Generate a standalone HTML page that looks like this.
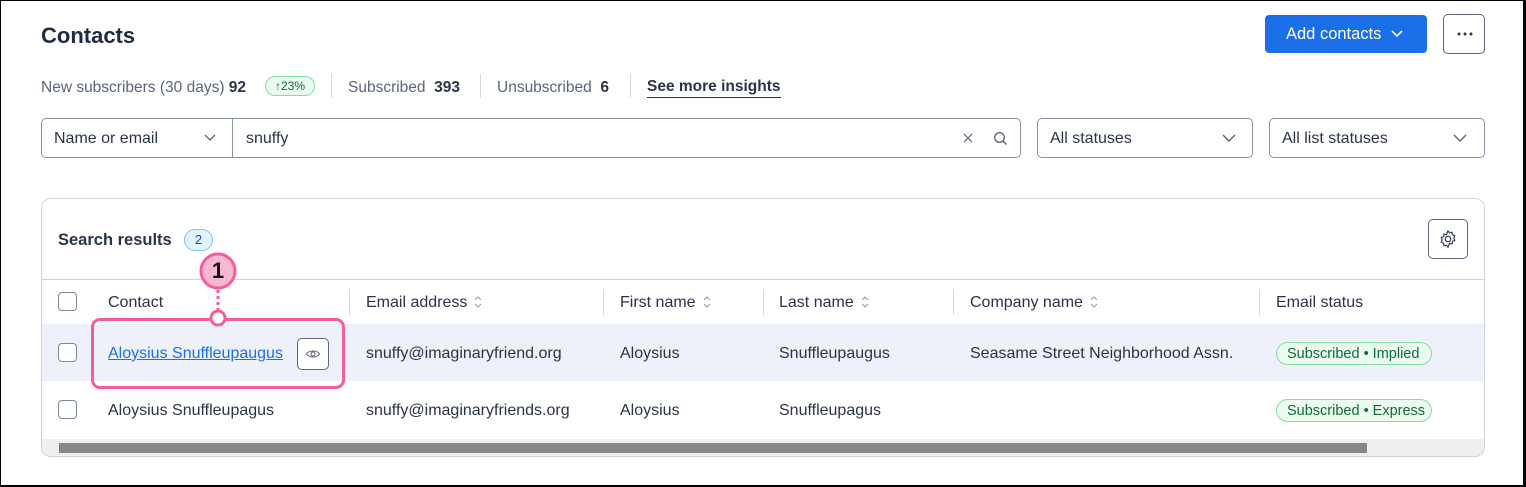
<!DOCTYPE html>
<html><head><meta charset="utf-8"><style>
*{box-sizing:border-box;margin:0;padding:0}
body{width:1526px;height:487px;background:#fff;font-family:"Liberation Sans",sans-serif;color:#2b3348;position:relative;overflow:hidden}
.frame{position:absolute;left:0;top:0;width:1526px;height:487px;border:1px solid #000;border-right:3px solid #000;border-bottom:2px solid #000}
.a{position:absolute;white-space:nowrap}
.box{position:absolute;border:1px solid #8b93a7;border-radius:5px;background:#fff}
.t15{font-size:16px}
.sep{position:absolute;width:1px;background:#d5d9e2}
.cb{position:absolute;width:19px;height:19px;border:1.5px solid #7c849a;border-radius:4px;background:#fff}
.pill{position:absolute;height:23px;border:1px solid #7fe0a2;background:#ecfbf0;border-radius:12px;color:#126b36;font-size:14.5px;line-height:22px;padding-left:10px}
svg{position:absolute}
.srt{display:inline-block;position:relative;width:10px;height:16px;vertical-align:-3px;margin-left:6px}
</style></head><body>
<div class="a" style="left:41px;top:23px;font-size:22px;font-weight:bold;color:#1f2a44">Contacts</div>
<div class="a" style="left:1265px;top:15px;width:162px;height:38px;background:#1b6fe8;border-radius:4px;color:#fff;font-size:16.5px;line-height:39px;padding-left:21px">Add contacts</div>
<svg style="left:1390px;top:29px" width="14" height="10"><path d="M2 2l5 5 5-5" stroke="#fff" stroke-width="1.6" fill="none"/></svg>
<div class="box" style="left:1443px;top:14px;width:42px;height:40px;border-color:#5d667b"></div>
<svg style="left:1455px;top:31px" width="20" height="6"><circle cx="4" cy="3" r="1.5" fill="#2b3348"/><circle cx="10" cy="3" r="1.5" fill="#2b3348"/><circle cx="16" cy="3" r="1.5" fill="#2b3348"/></svg>

<div class="a t15" style="left:41px;top:79px;color:#5b6478;font-size:15.5px">New subscribers (30 days) <b style="color:#2b3348">92</b></div>
<div class="a" style="left:265px;top:76px;width:50px;height:20px;border:1px solid #7fe0a2;background:#ecfbf0;border-radius:10px;font-size:12px;line-height:18px;color:#126b36;text-align:center">↑23%</div>
<div class="sep" style="left:331px;top:74px;height:24px"></div>
<div class="a t15" style="left:348px;top:79px;color:#5b6478;font-size:15.5px">Subscribed &nbsp;<b style="color:#2b3348">393</b></div>
<div class="sep" style="left:480px;top:74px;height:24px"></div>
<div class="a t15" style="left:497px;top:79px;color:#5b6478;font-size:15.5px">Unsubscribed &nbsp;<b style="color:#2b3348">6</b></div>
<div class="sep" style="left:630px;top:74px;height:24px"></div>
<div class="a t15" style="left:647px;top:78px;font-weight:bold;color:#2b3348;border-bottom:1.5px solid #2b3348;padding-bottom:1px;font-size:15.5px">See more insights</div>

<div class="box" style="left:41px;top:118px;width:980px;height:40px"></div>
<div class="sep" style="left:232px;top:119px;height:38px;background:#8b93a7"></div>
<div class="a t15" style="left:54px;top:130px">Name or email</div>
<svg style="left:204px;top:134px" width="12" height="8"><path d="M1 1l5 5 5-5" stroke="#5b6478" stroke-width="1.3" fill="none"/></svg>
<div class="a t15" style="left:246px;top:130px">snuffy</div>
<svg style="left:962px;top:132px" width="12" height="12"><path d="M2 2l8 8M10 2l-8 8" stroke="#5b6478" stroke-width="1.2"/></svg>
<svg style="left:993px;top:131px" width="15" height="15"><circle cx="6.5" cy="6.5" r="4.8" stroke="#5b6478" stroke-width="1.3" fill="none"/><path d="M10 10l3.5 3.5" stroke="#5b6478" stroke-width="1.3"/></svg>
<div class="box" style="left:1037px;top:118px;width:216px;height:40px"></div>
<div class="a t15" style="left:1050px;top:130px">All statuses</div>
<svg style="left:1222px;top:134px" width="14" height="9"><path d="M1 1l6 6 6-6" stroke="#5b6478" stroke-width="1.4" fill="none"/></svg>
<div class="box" style="left:1269px;top:118px;width:216px;height:40px"></div>
<div class="a t15" style="left:1282px;top:130px">All list statuses</div>
<svg style="left:1453px;top:134px" width="14" height="9"><path d="M1 1l6 6 6-6" stroke="#5b6478" stroke-width="1.4" fill="none"/></svg>

<div style="position:absolute;left:41px;top:198px;width:1444px;height:259px;border:1px solid #cdd3de;border-radius:10px;overflow:hidden;background:#fff">
 <div style="position:absolute;left:0;top:80px;width:100%;height:1px;background:#cdd3de"></div>
 <div style="position:absolute;left:0;top:125px;width:100%;height:57px;background:#eef1f9"></div>
 <div style="position:absolute;left:0;top:240px;width:100%;height:18px;background:#efefef"></div>
 <div style="position:absolute;left:17px;top:244px;width:1308px;height:10px;background:#878787"></div>
</div>
<div class="a" style="left:58px;top:231px;font-size:16.5px;font-weight:bold">Search results</div>
<div class="a" style="left:184px;top:229px;width:29px;height:22px;border:1px solid #7cc4f5;background:#e3f3fd;border-radius:11px;font-size:13px;line-height:20px;text-align:center;color:#1b4f8a">2</div>
<div class="box" style="left:1428px;top:219px;width:40px;height:40px;border-color:#5d667b"></div>
<svg style="left:1437px;top:228px" width="22" height="22" viewBox="0 0 24 24"><path d="M12 3l1.6 2.2 2.7-.6.6 2.7 2.5 1.2-1 2.5 1 2.5-2.5 1.2-.6 2.7-2.7-.6L12 21l-1.6-2.2-2.7.6-.6-2.7-2.5-1.2 1-2.5-1-2.5 2.5-1.2.6-2.7 2.7.6z" stroke="#3d4660" stroke-width="1.4" fill="none" stroke-linejoin="round"/><circle cx="12" cy="12" r="3" stroke="#3d4660" stroke-width="1.4" fill="none"/></svg>

<div class="cb" style="left:58px;top:292px"></div>
<div class="a t15" style="left:108px;top:294px">Contact</div>
<div class="sep" style="left:349px;top:289px;height:26px"></div>
<div class="a t15" style="left:366px;top:294px">Email address<span class="srt"><svg style="left:0;top:0" width="10" height="16"><path d="M2 6l3-3 3 3M2 10l3 3 3-3" stroke="#9aa1b2" stroke-width="1.2" fill="none"/></svg></span></div>
<div class="sep" style="left:603px;top:289px;height:26px"></div>
<div class="a t15" style="left:620px;top:294px">First name<span class="srt"><svg style="left:0;top:0" width="10" height="16"><path d="M2 6l3-3 3 3M2 10l3 3 3-3" stroke="#9aa1b2" stroke-width="1.2" fill="none"/></svg></span></div>
<div class="sep" style="left:763px;top:289px;height:26px"></div>
<div class="a t15" style="left:779px;top:294px">Last name<span class="srt"><svg style="left:0;top:0" width="10" height="16"><path d="M2 6l3-3 3 3M2 10l3 3 3-3" stroke="#9aa1b2" stroke-width="1.2" fill="none"/></svg></span></div>
<div class="sep" style="left:953px;top:289px;height:26px"></div>
<div class="a t15" style="left:970px;top:294px">Company name<span class="srt"><svg style="left:0;top:0" width="10" height="16"><path d="M2 6l3-3 3 3M2 10l3 3 3-3" stroke="#9aa1b2" stroke-width="1.2" fill="none"/></svg></span></div>
<div class="sep" style="left:1259px;top:289px;height:26px"></div>
<div class="a t15" style="left:1276px;top:294px">Email status</div>

<div class="cb" style="left:58px;top:343px"></div>
<div class="a t15" style="left:108px;top:345px;color:#1b6fe8;text-decoration:underline">Aloysius Snuffleupaugus</div>
<div class="box" style="left:297px;top:338px;width:32px;height:32px;border-color:#5d667b"></div>
<svg style="left:305px;top:347px" width="16" height="14"><path d="M1.5 7C4 3 12 3 14.5 7 12 11 4 11 1.5 7z" stroke="#5b6478" stroke-width="1.1" fill="none"/><circle cx="8" cy="7" r="2" stroke="#5b6478" stroke-width="1.1" fill="none"/></svg>
<div class="a t15" style="left:366px;top:345px">snuffy@imaginaryfriend.org</div>
<div class="a t15" style="left:620px;top:345px">Aloysius</div>
<div class="a t15" style="left:779px;top:345px">Snuffleupaugus</div>
<div class="a t15" style="left:970px;top:345px">Seasame Street Neighborhood Assn.</div>
<div class="pill" style="left:1276px;top:342px;width:156px">Subscribed • Implied</div>

<div class="cb" style="left:58px;top:400px"></div>
<div class="a t15" style="left:108px;top:402px">Aloysius Snuffleupagus</div>
<div class="a t15" style="left:366px;top:402px">snuffy@imaginaryfriends.org</div>
<div class="a t15" style="left:620px;top:402px">Aloysius</div>
<div class="a t15" style="left:779px;top:402px">Snuffleupagus</div>
<div class="pill" style="left:1276px;top:399px;width:156px">Subscribed • Express</div>

<div style="position:absolute;left:91px;top:318px;width:254px;height:71px;border:3px solid #f45d9b;border-radius:9px"></div>
<svg style="left:195px;top:250px" width="48" height="80"><path d="M23 40v24" stroke="#f45d9b" stroke-width="3" stroke-dasharray="3 3"/><circle cx="23" cy="21" r="17" fill="#f9b7d2" stroke="#f45d9b" stroke-width="3"/><circle cx="23" cy="68" r="7" fill="#fff" stroke="#f45d9b" stroke-width="3"/></svg>
<div class="a" style="left:208px;top:258px;width:20px;text-align:center;font-size:22px;font-weight:bold;color:#111">1</div>
<div class="frame"></div>
</body></html>
